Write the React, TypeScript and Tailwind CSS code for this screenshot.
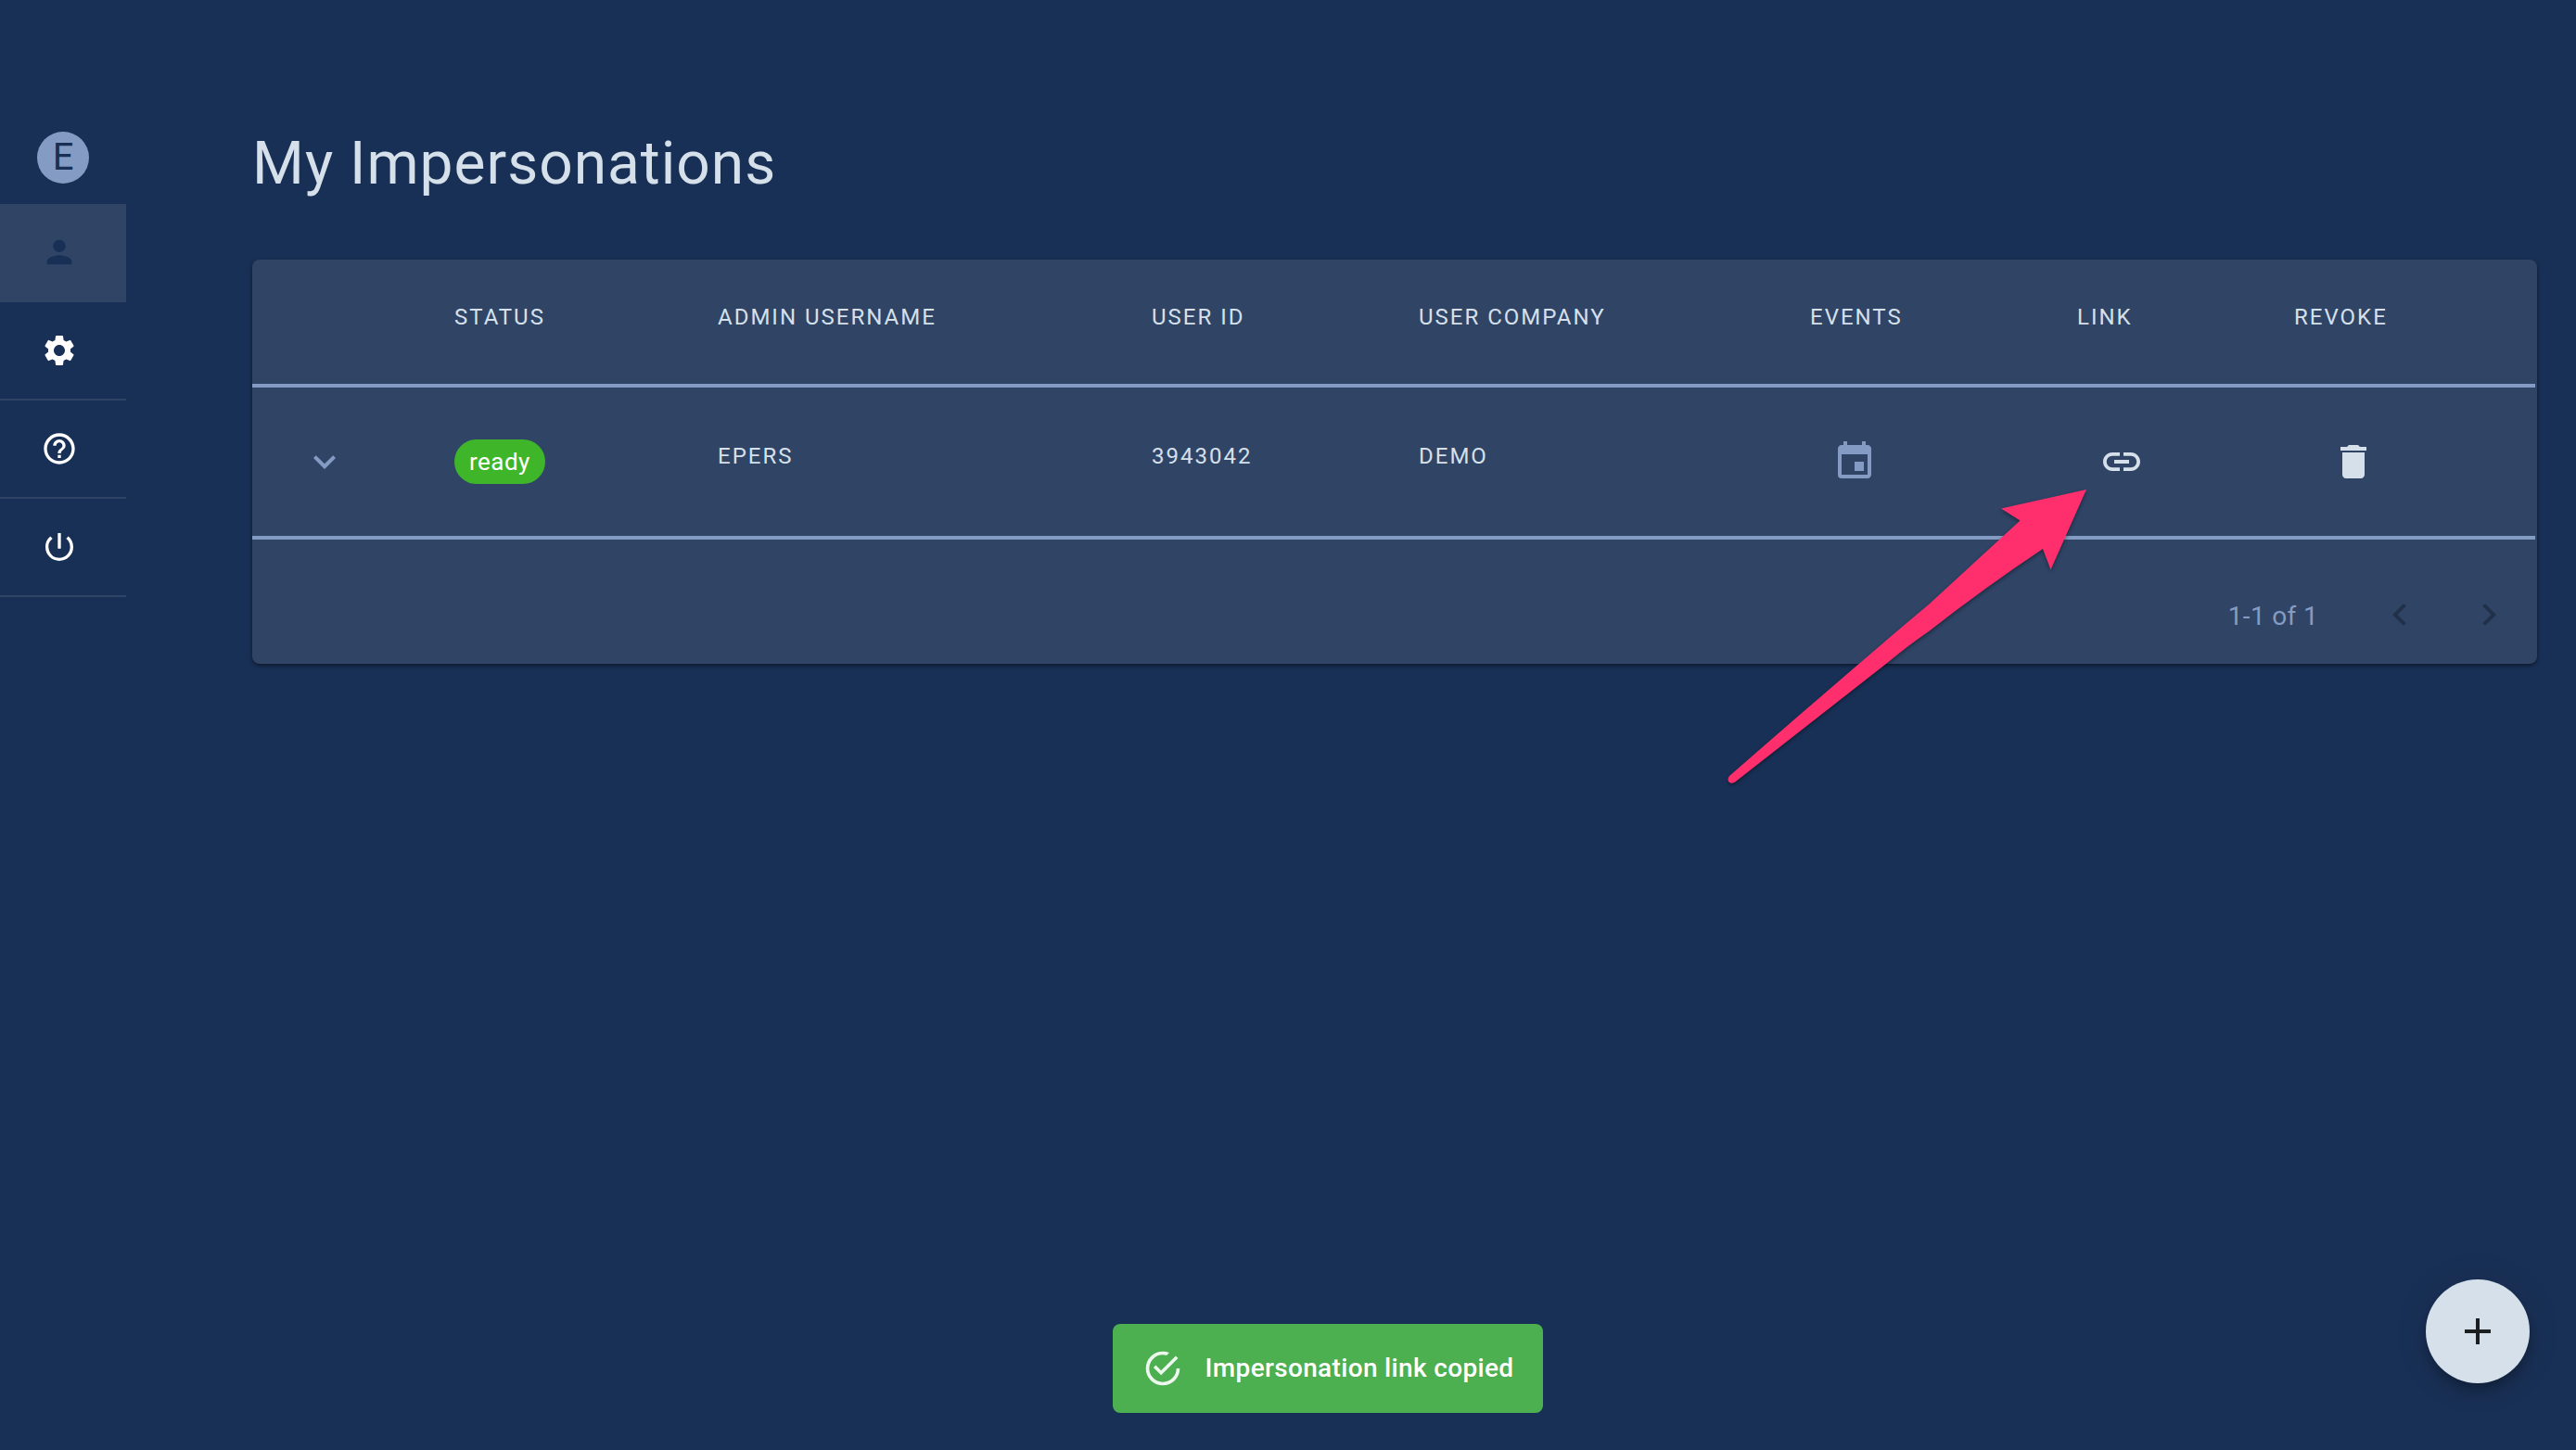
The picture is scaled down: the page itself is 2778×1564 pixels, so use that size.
import React from "react";
import {
  MdAdd,
  MdChevronLeft,
  MdChevronRight,
  MdDelete,
  MdEvent,
  MdExpandMore,
  MdHelpOutline,
  MdLink,
  MdPerson,
  MdPowerSettingsNew,
  MdSettings,
} from "react-icons/md";

const navItems = [
  { label: "Impersonations", Icon: MdPerson, active: true },
  { label: "Settings", Icon: MdSettings, active: false },
  { label: "Help", Icon: MdHelpOutline, active: false },
  { label: "Log out", Icon: MdPowerSettingsNew, active: false },
];

const headers = ["Status", "Admin Username", "User ID", "User Company", "Events", "Link", "Revoke"];

const rows = [{ status: "ready", admin: "EPERS", userId: "3943042", company: "DEMO" }];

function Sidebar() {
  return (
    <aside className="flex w-[136px] shrink-0 flex-col pt-[142px]">
      <div className="mb-[22px] ml-10 flex size-14 items-center justify-center rounded-full bg-[#849cc3] text-[40px] leading-none text-[#193056]">
        E
      </div>
      <nav>
        {navItems.map(({ label, Icon, active }) => (
          <a
            key={label}
            href="#"
            aria-label={label}
            className={
              active
                ? "flex h-[106px] items-center border-b-2 border-[#304466] bg-[#304466] pl-11 text-[#193056]"
                : "flex h-[106px] items-center border-b-2 border-[#304466] pl-11 text-white"
            }
          >
            <Icon size={40} />
          </a>
        ))}
      </nav>
    </aside>
  );
}

function ImpersonationsTable() {
  return (
    <section className="mt-[42px] rounded-lg bg-[#304466] pr-0.5 shadow-[0_2px_4px_rgba(0,0,0,0.5)]">
      <table className="w-full table-fixed border-separate border-spacing-0 text-left text-2xl tracking-[2px] text-[#d5e0eb]">
        <colgroup>
          <col className="w-[186px]" />
          <col className="w-[284px]" />
          <col className="w-[468px]" />
          <col className="w-[288px]" />
          <col className="w-[422px]" />
          <col className="w-[288px]" />
          <col className="w-[234px]" />
          <col className="w-[292px]" />
        </colgroup>
        <thead>
          <tr className="h-[138px] *:border-b-4 *:border-[#849cc3]">
            <td />
            {headers.map((h) => (
              <th key={h} scope="col" className="pb-2.5 pl-8 font-normal uppercase">
                {h}
              </th>
            ))}
          </tr>
        </thead>
        <tbody>
          {rows.map((r) => (
            <tr key={r.userId} className="h-[164px] *:border-b-4 *:border-[#849cc3]">
              <td className="pl-[54px]">
                <button aria-label="Expand row" className="block text-[#849cc3]">
                  <MdExpandMore size={48} />
                </button>
              </td>
              <td className="pl-8">
                <span className="flex h-12 w-fit items-center rounded-full bg-[#3fb62a] px-4 text-[26px] tracking-[0.018em] text-white">
                  {r.status}
                </span>
              </td>
              <td className="pb-3 pl-8">{r.admin}</td>
              <td className="pb-3 pl-8">{r.userId}</td>
              <td className="pb-3 pl-8">{r.company}</td>
              <td className="pl-14">
                <button aria-label="Events" className="block text-[#849cc3]">
                  <MdEvent size={48} />
                </button>
              </td>
              <td className="pl-14">
                <button aria-label="Copy link" className="block">
                  <MdLink size={48} />
                </button>
              </td>
              <td className="pl-[72px]">
                <button aria-label="Revoke" className="block">
                  <MdDelete size={48} />
                </button>
              </td>
            </tr>
          ))}
        </tbody>
      </table>
      <footer className="flex h-[134px] items-center justify-end pt-7 pr-0.5 text-[28px] tracking-[0.012em] text-[#849cc3]">
        <span className="mr-10 pt-1">1-1 of 1</span>
        <button aria-label="Previous page" disabled className="p-6 text-[#22314a]">
          <MdChevronLeft size={48} />
        </button>
        <button aria-label="Next page" disabled className="p-6 text-[#22314a]">
          <MdChevronRight size={48} />
        </button>
      </footer>
    </section>
  );
}

function PointerArrow() {
  return (
    <svg
      aria-hidden="true"
      className="pointer-events-none absolute top-[520px] right-[520px] overflow-visible drop-shadow-[0_2px_2px_rgba(0,0,0,0.4)]"
      width="400"
      height="336"
      viewBox="1858 520 400 336"
    >
      <path
        fill="#ff2f6d"
        d="M2250 528 L2158 548.5 L2178.5 561.5 Q2130 606 2080 652 Q2014 707 1865 837 Q1862 841 1865 844 Q1869 846 1873 842 L2034 716 Q2058 696 2080 681 Q2140 634 2203 592 L2211.5 614.5 Z"
      />
    </svg>
  );
}

function Toast() {
  return (
    <div className="pointer-events-none fixed right-[50px] bottom-10 left-[136px] flex justify-center">
      <div
        role="status"
        className="flex h-24 items-center gap-6 rounded-lg bg-[#4caf50] px-8 text-[28px] font-medium tracking-[0.012em] text-white"
      >
        <svg aria-hidden="true" className="size-11 opacity-90" viewBox="0 0 24 24" fill="currentColor">
          <path d="M20,12A8,8 0 0,1 12,20A8,8 0 0,1 4,12A8,8 0 0,1 12,4C12.76,4 13.5,4.11 14.2,4.31L15.77,2.74C14.61,2.26 13.34,2 12,2A10,10 0 0,0 2,12A10,10 0 0,0 12,22A10,10 0 0,0 22,12M7.91,10.08L6.5,11.5L11,16L21,6L19.59,4.58L11,13.17L7.91,10.08Z" />
        </svg>
        <span>Impersonation link copied</span>
      </div>
    </div>
  );
}

export default function App() {
  return (
    <div className="relative flex min-h-screen bg-[#193056] font-[Roboto,sans-serif]">
      <Sidebar />
      <main className="min-w-0 flex-1 pt-[135px] pr-[42px] pl-[136px]">
        <h1 className="text-[64px] leading-[83px] tracking-[1px] text-[#d5e0eb]">My Impersonations</h1>
        <div className="pt-5">
          <ImpersonationsTable />
        </div>
      </main>
      <PointerArrow />
      <Toast />
      <button
        aria-label="Add impersonation"
        className="fixed right-[50px] bottom-[72px] flex size-28 items-center justify-center rounded-full bg-[#d5e0eb] text-[#1c1f20] shadow-[0_6px_10px_-2px_rgba(0,0,0,0.2),0_12px_20px_rgba(0,0,0,0.14),0_2px_36px_rgba(0,0,0,0.12)]"
      >
        <MdAdd size={48} />
      </button>
    </div>
  );
}
